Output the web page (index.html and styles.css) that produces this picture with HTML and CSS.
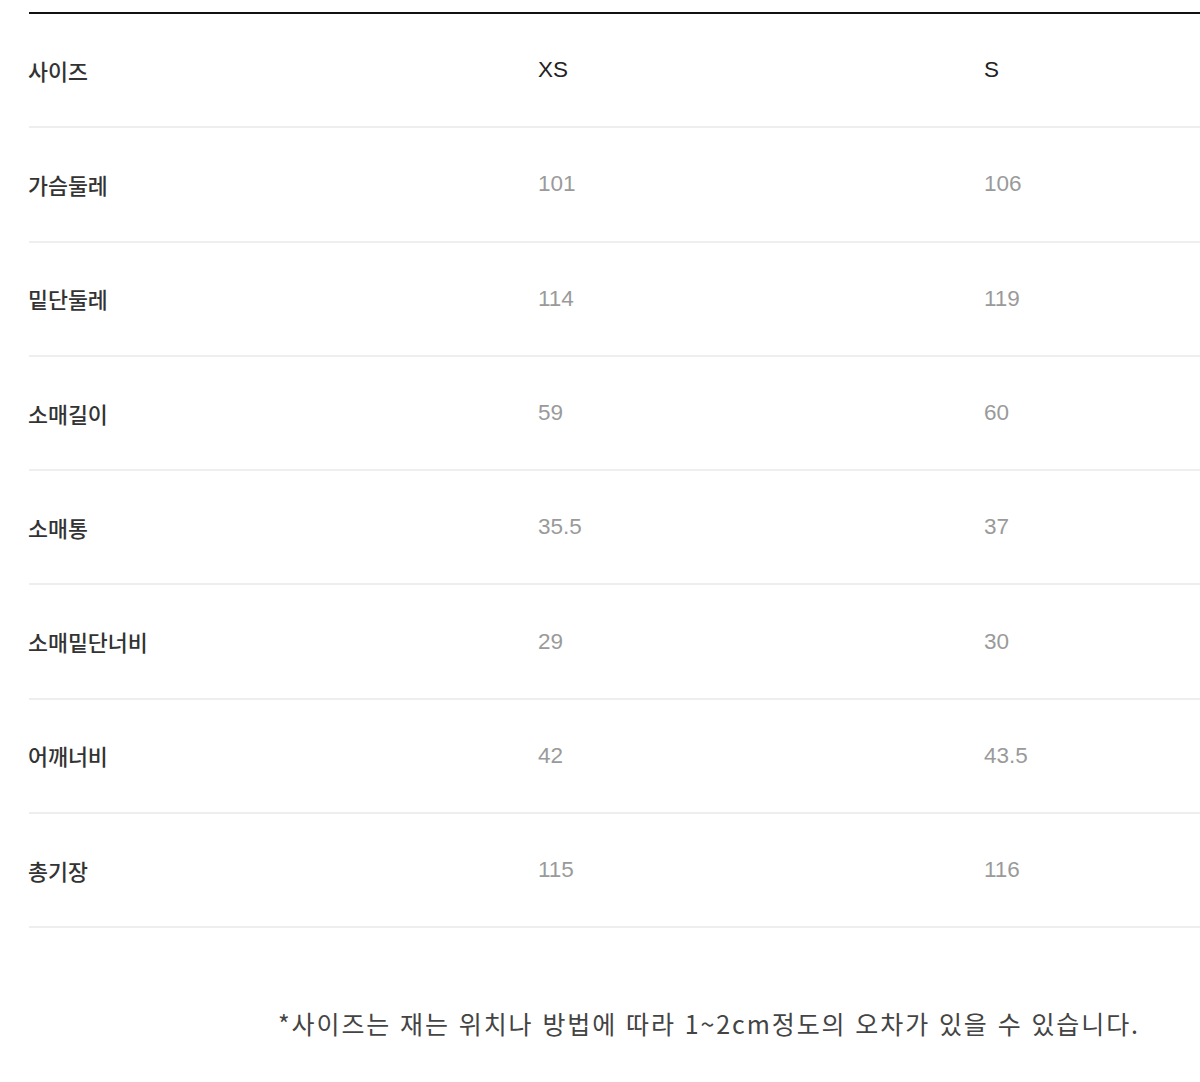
FILE: index.html
```html
<!DOCTYPE html>
<html lang="ko">
<head>
<meta charset="utf-8">
<title>사이즈</title>
<link rel="stylesheet" href="styles.css">
</head>
<body>
<div class="page">
  <div class="size-table">
    <div class="row head">
      <div class="label">사이즈</div>
      <div class="val">XS</div>
      <div class="val">S</div>
    </div>
    <div class="row">
      <div class="label">가슴둘레</div>
      <div class="val num">101</div>
      <div class="val num">106</div>
    </div>
    <div class="row">
      <div class="label">밑단둘레</div>
      <div class="val num">114</div>
      <div class="val num">119</div>
    </div>
    <div class="row">
      <div class="label">소매길이</div>
      <div class="val num">59</div>
      <div class="val num">60</div>
    </div>
    <div class="row">
      <div class="label">소매통</div>
      <div class="val num">35.5</div>
      <div class="val num">37</div>
    </div>
    <div class="row">
      <div class="label">소매밑단너비</div>
      <div class="val num">29</div>
      <div class="val num">30</div>
    </div>
    <div class="row">
      <div class="label">어깨너비</div>
      <div class="val num">42</div>
      <div class="val num">43.5</div>
    </div>
    <div class="row">
      <div class="label">총기장</div>
      <div class="val num">115</div>
      <div class="val num">116</div>
    </div>
  </div>
  <p class="note">*사이즈는 재는 위치나 방법에 따라 1~2cm정도의 오차가 있을 수 있습니다.</p>
</div>
</body>
</html>
```

FILE: styles.css
```css
html, body {
  margin: 0;
  padding: 0;
  background: #ffffff;
}

.page {
  padding-top: 12px;
  font-family: "Liberation Sans", "Noto Sans CJK KR", sans-serif;
}

.size-table {
  margin-left: 29px;
  border-top: 2px solid #111111;
}

.row {
  display: grid;
  grid-template-columns: 509px 446px 1fr;
  align-items: center;
  height: 114.3px;
  box-sizing: border-box;
  border-bottom: 2px solid #eeeeee;
}

.label {
  margin-left: -1px;
  font-size: 21.7px;
  font-weight: 500;
  color: #333333;
  font-family: "Noto Sans CJK KR", sans-serif;
}

.val {
  font-size: 22.5px;
  color: #222222;
}

.val.num {
  color: #9a9a9a;
}

.note {
  margin: 80px 0 0 0;
  padding-left: 278px;
  font-size: 25px;
  line-height: 30px;
  letter-spacing: 1.9px;
  color: #444444;
  font-family: "Noto Sans CJK KR", sans-serif;
  white-space: nowrap;
}
```
